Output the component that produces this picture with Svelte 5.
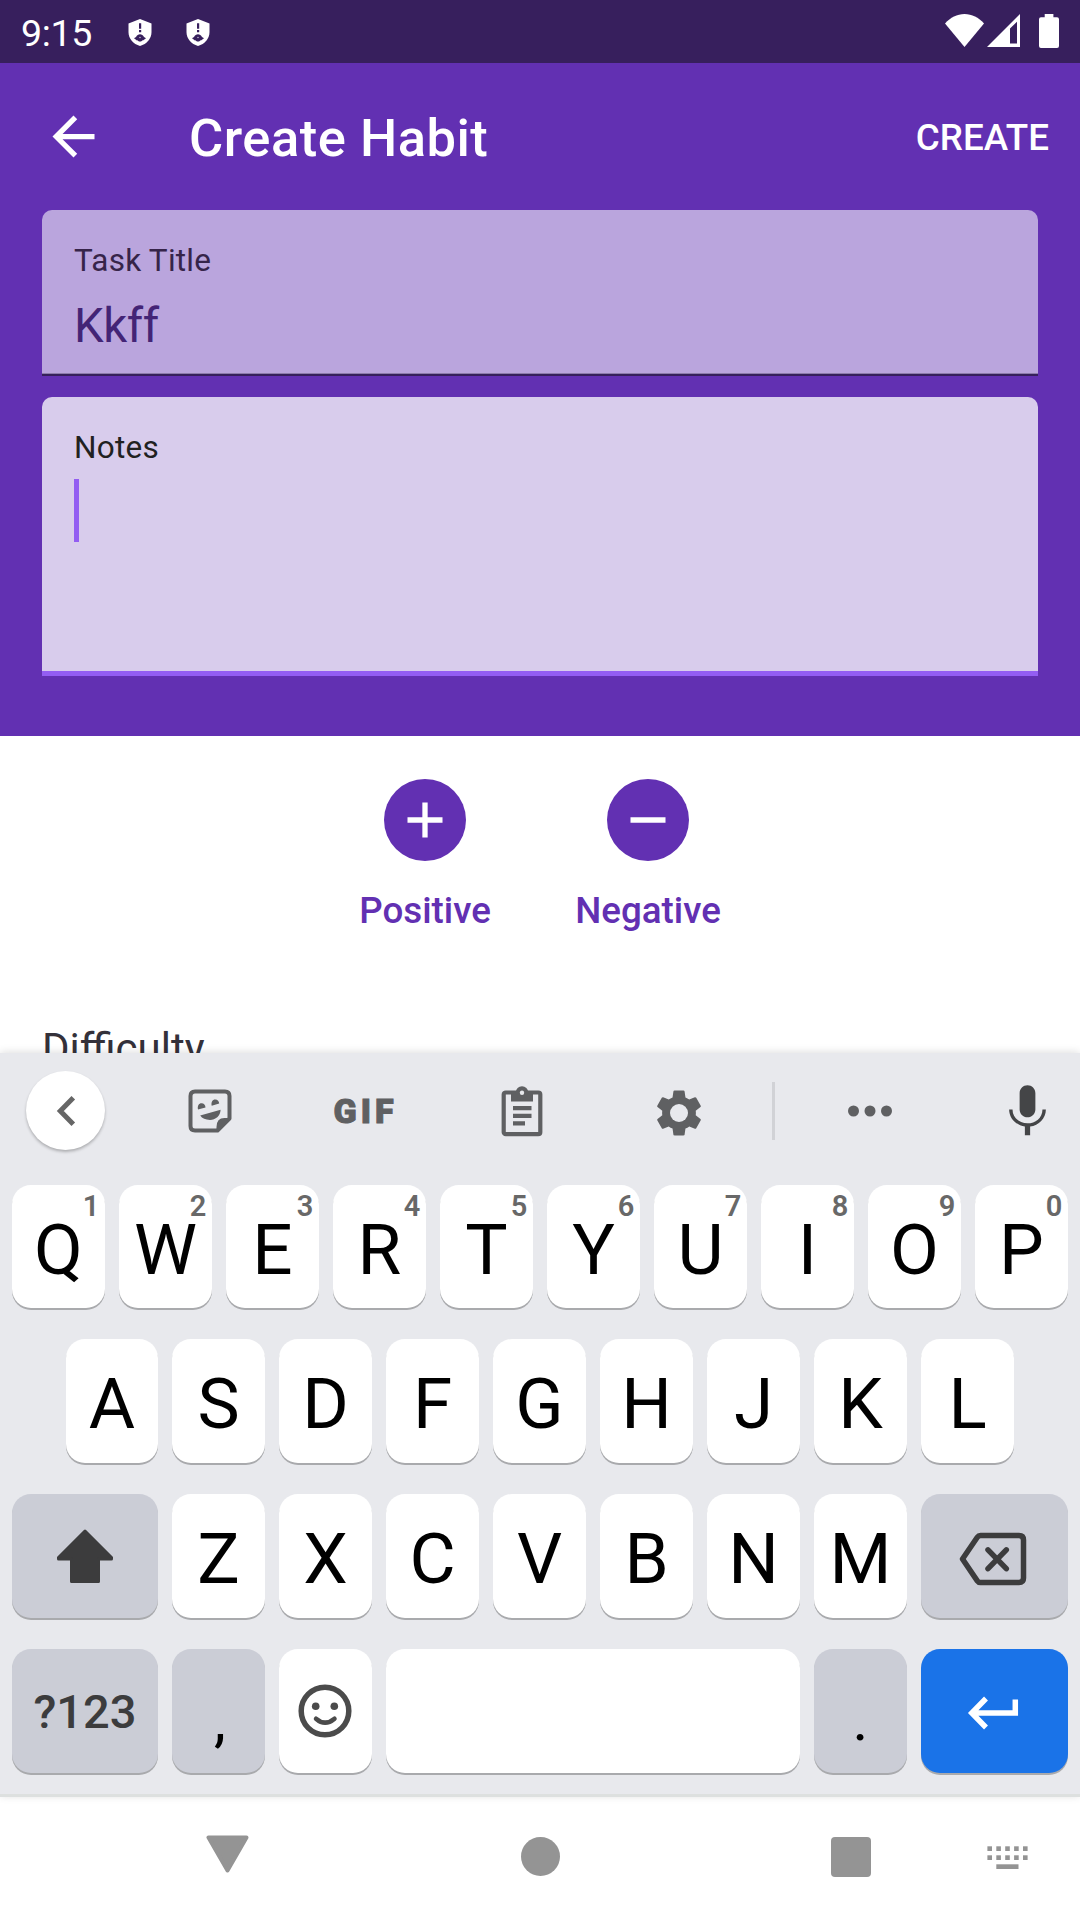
<script>
  const rowOne = 'QWERTYUIOP'.split('').map((letter, i) => ({ letter, hint: String((i + 1) % 10) }));
  const rowTwo = 'ASDFGHJKL'.split('');
  const rowThree = 'ZXCVBNM'.split('');
  const dots = [0, 1, 2, 3, 4];
</script>

{#snippet shield()}
  <svg class="shield" viewBox="0 0 24 27" width="24" height="27">
    <path fill="#fff" d="M12 0 23.500 4.400V13c0 6.500-4.700 12-11.500 14C5.200 25 .5 19.500.5 13V4.400z" />
    <path fill="#371f5d" d="M11 4.300h2.200v5.400H11zM11 11h2.200v2.200H11z" />
    <path fill="#371f5d" d="M6 19.200 8 18c1-1.900 2.300-2.800 4-2.800s3 .9 4 2.800l2 1.200-2 1.500c-.8.7-1.500.5-2.200 1.200-1.200.8-2.500.8-3.600 0-.7-.7-1.400-.5-2.200-1.200z" />
    <circle cx="12" cy="18.500" r=".8" fill="#b9aecb" />
  </svg>
{/snippet}

<div class="screen">
  <header class="status">
    <span class="time">9:15</span>
    {@render shield()}
    {@render shield()}
    <div class="system">
      <svg class="wifi" viewBox="0 0 39 33" width="39" height="33">
        <path fill="#fff" d="M0 9.500C5.500 3.500 12 0 19.500 0S33.500 3.500 39 9.500L19.500 33z" />
      </svg>
      <svg class="signal" viewBox="0 0 33 33" width="33" height="33">
        <path fill="#fff" fill-rule="evenodd" d="M33 0v33H0zM23 14.500V29.500h7V7.800z" />
      </svg>
      <svg viewBox="0 0 20 34" width="20" height="34">
        <path fill="#fff" d="M5.700 0h8.700v3.300H18q2 0 2 2V32q0 2-2 2H2q-2 0-2-2V5.300q0-2 2-2h3.700z" />
      </svg>
    </div>
  </header>

  <section class="top">
    <div class="appbar">
      <svg class="back" viewBox="0 0 24 24" width="63" height="63">
        <path fill="#fff" d="M20 11H7.830l5.590-5.590L12 4l-8 8 8 8 1.410-1.410L7.830 13H20z" />
      </svg>
      <h1>Create Habit</h1>
      <span class="create">CREATE</span>
    </div>
    <div class="field title-field">
      <div class="label">Task Title</div>
      <div class="value">Kkff</div>
    </div>
    <div class="field notes-field">
      <div class="label">Notes</div>
      <div class="caret"></div>
    </div>
  </section>

  <main>
    <div class="choices">
      <div class="choice">
        <svg viewBox="0 0 82 82" width="82" height="82">
          <circle cx="41" cy="41" r="41" fill="#6230b2" />
          <path stroke="#fff" stroke-width="5.300" d="M23.500 41h35M41 23.500v35" />
        </svg>
        <span>Positive</span>
      </div>
      <div class="choice">
        <svg viewBox="0 0 82 82" width="82" height="82">
          <circle cx="41" cy="41" r="41" fill="#6230b2" />
          <path stroke="#fff" stroke-width="5.300" d="M23.500 41h35" />
        </svg>
        <span>Negative</span>
      </div>
    </div>
    <div class="difficulty">Difficulty</div>
  </main>

  <section class="keyboard">
    <div class="tools">
      <div class="tool">
        <div class="round">
          <svg viewBox="0 0 20 32" width="20" height="32">
            <path fill="none" stroke="#666" stroke-width="5" d="M17.300 2.700 4.300 16l13 13.300" />
          </svg>
        </div>
      </div>
      <div class="tool">
        <svg class="sticker" viewBox="0 0 44 44" width="44" height="44">
          <path fill="none" stroke="#5f6062" stroke-width="4" stroke-linejoin="round" d="M7 2.500h30q4.500 0 4.500 4.500v22.500L29.500 41.500H7q-4.500 0-4.500-4.500V7q0-4.500 4.500-4.500z" />
          <path fill="#5f6062" d="M28.500 41V38q0-9 8-9h5zM10 20.500c-.8-3.600.8-6.300 3.500-6.300 2.500 0 3.900 2 4 4.200zM23.700 16.700c-.8-3.600.8-6.300 3.500-6.300 2.500 0 3.900 2 4 4.200zM12.200 26.600 32.600 20.800C32.400 27 27.500 31 22 31c-4.500 0-7.800-1.500-9.800-4.400z" />
        </svg>
      </div>
      <div class="tool gif">GIF</div>
      <div class="tool">
        <svg viewBox="0 0 42 52" width="42" height="52">
          <rect x="2.700" y="7.500" width="36.600" height="41.700" rx="2" fill="none" stroke="#5f6062" stroke-width="4.200" />
          <path fill="#5f6062" d="M10 6h22v10.500H10zM12 21h18.500v4.300H12zM12 28.800h18.500v4.300H12zM12 36.300h12v4.300H12z" />
          <circle cx="21" cy="7.500" r="6.200" fill="#5f6062" />
          <circle cx="21" cy="7.700" r="2.200" fill="#e8e9ed" />
        </svg>
      </div>
      <div class="tool">
        <svg class="gear" viewBox="0 0 24 24" width="54" height="54">
          <path fill="#5f6062" d="M19.430 12.980c.04-.32.07-.64.07-.98s-.03-.66-.07-.98l2.110-1.650c.19-.15.24-.42.12-.64l-2-3.460c-.12-.22-.39-.3-.61-.22l-2.490 1c-.52-.4-1.080-.73-1.690-.98l-.38-2.650C14.460 2.180 14.250 2 14 2h-4c-.25 0-.46.18-.49.42l-.38 2.650c-.61.25-1.170.59-1.690.98l-2.490-1c-.23-.09-.49 0-.61.22l-2 3.460c-.13.22-.07.49.12.64l2.110 1.650c-.04.32-.07.65-.07.98s.03.66.07.98l-2.110 1.650c-.19.15-.24.42-.12.64l2 3.460c.12.22.39.3.61.22l2.490-1c.52.4 1.080.73 1.690.98l.38 2.650c.03.24.24.42.49.42h4c.25 0 .46-.18.49-.42l.38-2.650c.61-.25 1.170-.59 1.690-.98l2.490 1c.23.09.49 0 .61-.22l2-3.460c.12-.22.07-.49-.12-.64z" />
          <circle cx="12" cy="12" r="4" fill="#e8e9ed" />
        </svg>
      </div>
      <div class="divider"></div>
      <div class="tool">
        <svg viewBox="0 0 44 12" width="44" height="12">
          <g fill="#5f6062"><circle cx="5.500" cy="6" r="5.500" /><circle cx="22" cy="6" r="5.500" /><circle cx="38.500" cy="6" r="5.500" /></g>
        </svg>
      </div>
      <div class="tool mic">
        <svg viewBox="0 0 24 24" width="63" height="63">
          <path fill="#444547" d="M12 14.200c1.660 0 3-1.340 3-3V5c0-1.660-1.340-3-3-3S9 3.340 9 5v6.200c0 1.660 1.340 3 3 3zM17.700 11.200c0 3.300-2.740 5.300-5.700 5.300s-5.700-2-5.700-5.300H5c0 3.410 2.720 6.030 6 6.520V21h2v-3.280c3.280-.48 6-3.100 6-6.520z" />
        </svg>
      </div>
    </div>

    <div class="keys">
      <div class="row first">
        {#each rowOne as key}
          <div class="key">{key.letter}<span class="hint">{key.hint}</span></div>
        {/each}
      </div>
      <div class="row second">
        {#each rowTwo as letter}
          <div class="key">{letter}</div>
        {/each}
      </div>
      <div class="row">
        <div class="key wide gray">
          <svg viewBox="0 0 56 54" width="56" height="54">
            <path fill="#3c3c3d" stroke="#3c3c3d" stroke-width="3" stroke-linejoin="round" d="M28 2 54.500 28.500v1.500H41.500V52.500h-27V30H1.500v-1.500z" />
          </svg>
        </div>
        {#each rowThree as letter}
          <div class="key">{letter}</div>
        {/each}
        <div class="key wide gray">
          <svg class="erase" viewBox="0 0 68 54" width="68" height="54">
            <path fill="none" stroke="#3c3c3d" stroke-width="5.500" stroke-linejoin="round" d="M21.500 3.500H60q4.500 0 4.500 4.500V46q0 4.500-4.500 4.500H21.500q-2 0-3.200-1.700L3.500 27 18.300 5.200q1.200-1.700 3.200-1.700z" />
            <path stroke="#3c3c3d" stroke-width="5.500" stroke-linecap="round" d="m29 17.800 18.300 18.900M47.300 17.800 29 36.700" />
          </svg>
        </div>
      </div>
      <div class="row">
        <div class="key wide gray symbols">?123</div>
        <div class="key gray mark comma">,</div>
        <div class="key">
          <svg class="smile" viewBox="0 0 54 54" width="54" height="54">
            <circle cx="27" cy="27" r="23.800" fill="none" stroke="#4b4b4b" stroke-width="5.500" />
            <circle cx="17.700" cy="22.200" r="3.800" fill="#4b4b4b" />
            <circle cx="36.300" cy="22.200" r="3.800" fill="#4b4b4b" />
            <path fill="none" stroke="#4b4b4b" stroke-width="4.500" stroke-linecap="round" d="M18 34.700q9 8 18.500 0" />
          </svg>
        </div>
        <div class="key space"></div>
        <div class="key gray mark">.</div>
        <div class="key wide enter">
          <svg viewBox="0 0 52 34" width="52" height="34">
            <path fill="none" stroke="#fff" stroke-width="5.500" d="M19 2.500 4.800 17 19 31.500M5 17h43.300V3.500" />
          </svg>
        </div>
      </div>
    </div>
  </section>

  <nav>
    <svg class="down" viewBox="0 0 43 38" width="43" height="38">
      <path fill="#949494" stroke="#949494" stroke-width="4" stroke-linejoin="round" d="M2.500 2.500h38L21.500 35.500z" />
    </svg>
    <svg class="home" viewBox="0 0 39 39" width="39" height="39"><circle cx="19.500" cy="19.500" r="19.500" fill="#949494" /></svg>
    <div class="recent"></div>
    <svg class="ime" viewBox="0 0 41 24" width="41" height="24">
      <g fill="#949494">
        {#each dots as n}
          <rect x={n * 8.9 + 0.4} y=".3" width="4.600" height="4.700" />
          <rect x={n * 8.9 + 0.4} y="9.300" width="4.600" height="4.700" />
        {/each}
        <rect x="9.300" y="18.300" width="22.200" height="4.700" />
      </g>
    </svg>
  </nav>
</div>

<style>
  :global(body) { margin: 0; background: #fff; }
  .screen { width: 1080px; height: 1920px; display: flex; flex-direction: column; overflow: hidden; background: #fff; font-family: Roboto, sans-serif; }
  svg { display: block; flex: none; }
  .status { height: 63px; flex: none; display: flex; align-items: flex-start; background: #371f5d; padding: 0 21px 0 21px; box-sizing: border-box; }
  .time { width: 107px; font-size: 37.500px; line-height: 66px; letter-spacing: -.3px; color: #fff; }
  .shield { margin: 19px 34px 0 0; }
  .system { margin-left: auto; display: flex; padding-top: 14px; }
  .wifi { margin-right: 3px; }
  .signal { margin-right: 19px; }
  .top { height: 673px; flex: none; background: #6230b2; padding: 0 42px; box-sizing: border-box; }
  .appbar { height: 147px; display: flex; align-items: center; }
  h1 { margin: 0 0 0 84px; font-size: 52.500px; font-weight: 500; line-height: 60px; letter-spacing: .5px; padding-top: 3px; color: #fff; }
  .create { margin-left: auto; margin-right: -11px; font-size: 36.750px; font-weight: 500; line-height: 44px; padding-top: 2px; color: #fff; }
  .field { padding: 35px 32px 0; box-sizing: border-box; border-radius: 10px 10px 0 0; }
  .title-field { height: 166px; background: linear-gradient(#8c7caa, #8c7caa) 0 163px / 100% 1px no-repeat, linear-gradient(#36205c, #36205c) 0 164px / 100% 2px no-repeat, #baa5dd; color: #432476; }
  .notes-field { height: 279px; margin-top: 21px; background: linear-gradient(#935df2, #935df2) 0 100% / 100% 5px no-repeat, #d8ccec; }
  .label { font-size: 31.500px; line-height: 32px; letter-spacing: .25px; color: #362449; }
  .notes-field .label { color: #212121; }
  .value { margin-top: 21px; font-size: 47.250px; line-height: 56px; letter-spacing: -.4px; }
  .caret { width: 5px; height: 63px; margin-top: 15px; background: #935df2; }
  main { height: 317px; flex: none; overflow: hidden; }
  .choices { display: flex; justify-content: center; padding: 43px 7px 0 0; }
  .choice { width: 223px; display: flex; flex-direction: column; align-items: center; gap: 28px; font-size: 36.750px; line-height: 44px; font-weight: 500; color: #6230b2; }
  .difficulty { margin: 91px 42px 0; font-size: 42px; line-height: 50px; color: #34313a; }
  .keyboard { height: 741px; flex: none; background: #e8e9ed; box-shadow: 0 -1px 8px rgba(0, 0, 0, .13); border-bottom: 3px solid #dde0df; position: relative; }
  .tools { height: 132px; display: grid; grid-template-columns: 131px 157px 152px 164px 150px 39px 154px 133px; align-items: center; box-sizing: border-box; padding-bottom: 16px; }
  .tool { display: flex; align-items: center; justify-content: center; }
  .round { width: 79px; height: 79px; margin-top: -1px; border-radius: 50%; background: #fff; box-shadow: 0 2px 3px rgba(0, 0, 0, .25); display: flex; align-items: center; justify-content: center; }
  .sticker { margin-top: -1px; }
  .gif { font-size: 34px; line-height: 40px; font-weight: 900; letter-spacing: 4px; padding-left: 3px; -webkit-text-stroke: 1px #5f6062; color: #5f6062; }
  .gear { margin-top: 3px; }
  .divider { width: 3px; height: 58px; justify-self: center; background: #d1d2d6; }
  .mic { justify-content: flex-start; padding-left: 49px; }
  .keys { display: flex; flex-direction: column; gap: 31px; padding: 0 12px; }
  .row { height: 124px; display: flex; gap: 14px; }
  .first { height: 123px; }
  .second { padding: 0 54px; }
  .second .key:first-child { flex: 0 0 92px; }
  .key { flex: 1 1 0; box-sizing: border-box; display: flex; align-items: center; justify-content: center; border-radius: 19px; background: #fff; box-shadow: 0 2px 0 #a9aaad; font-size: 71px; line-height: 84px; padding-top: 6px; color: #000; position: relative; }
  .hint { position: absolute; top: 2px; right: 5px; width: 18px; text-align: center; font-size: 29px; line-height: 38px; font-weight: 600; color: #686868; }
  .wide { flex: 0 0 147px; padding-top: 0; }
  .wide:first-child { flex-basis: 146px; }
  .gray { background: #cbcdd6; }
  .symbols { font-size: 47px; font-weight: 500; padding-top: 2px; color: #3c3c3d; }
  .mark { font-size: 60px; padding-top: 18px; }
  .comma { text-indent: 3px; }
  .smile { margin-top: -7px; margin-left: -1px; }
  .erase { margin-left: -3px; margin-top: 5px; }
  .space { flex: 0 0 414px; }
  .enter { background: #1a73e8; padding: 4px 3px 0 0; }
  nav { height: 123px; flex: none; background: #fff; display: flex; align-items: flex-start; padding-left: 206px; box-sizing: border-box; }
  .down { margin-top: 38px; }
  .home { margin: 40px 0 0 272px; }
  .recent { width: 40px; height: 40px; margin: 40px 0 0 271px; border-radius: 4px; background: #949494; }
  .ime { margin: 49px 0 0 116px; }
</style>
